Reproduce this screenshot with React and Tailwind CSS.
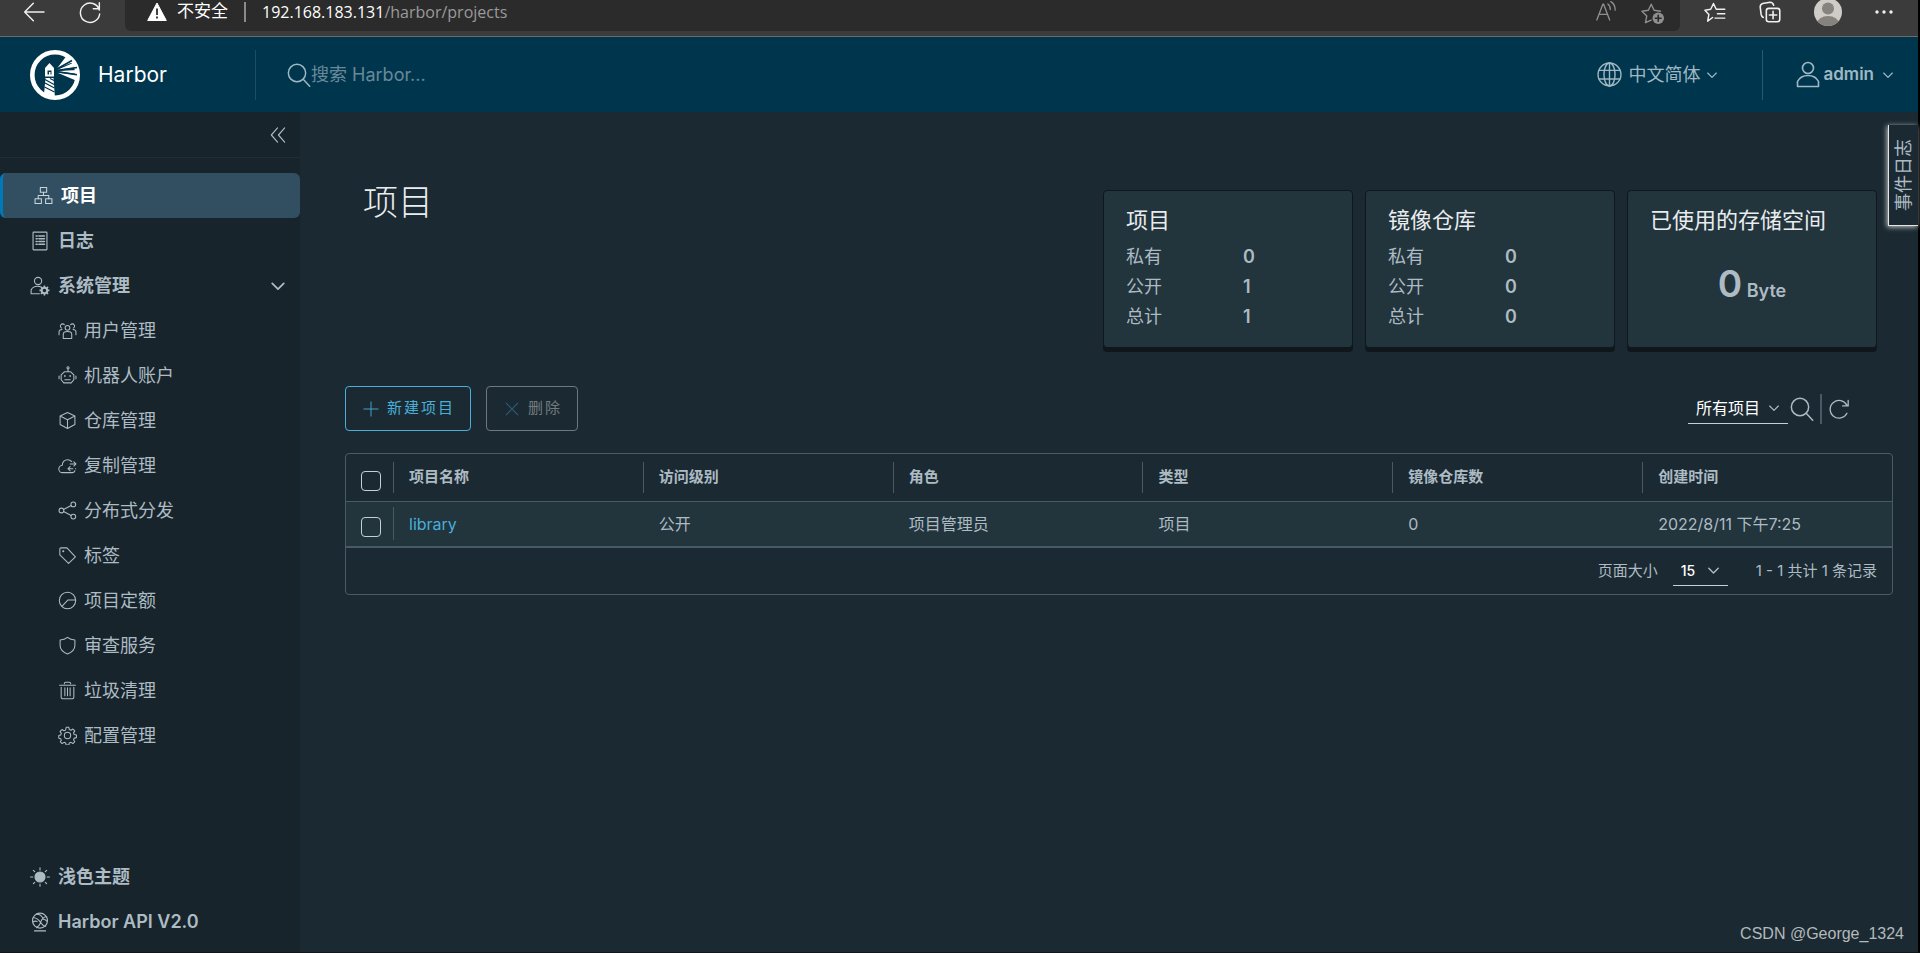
import React from "react";

function Icon({ className = "size-[22px]", sw = 2, children }) {
  return (
    <svg viewBox="0 0 36 36" className={"shrink-0 " + className} fill="none" stroke="currentColor" strokeWidth={sw} strokeLinejoin="round" strokeLinecap="round" aria-hidden="true">
      {children}
    </svg>
  );
}

function Chevron({ className = "size-[14px]", sw = 4 }) {
  return (
    <Icon className={className} sw={sw}>
      <path d="M5 12 L18 25 L31 12" />
    </Icon>
  );
}

const ICONS = {
  projects: (
    <>
      <rect x="12" y="3" width="12" height="9" />
      <rect x="2" y="24" width="12" height="9" />
      <rect x="22" y="24" width="12" height="9" />
      <path d="M18 12v6M8 24v-6h20v6" />
    </>
  ),
  logs: (
    <>
      <rect x="5.500" y="2" width="25" height="32" rx="1" />
      <path d="M11 9h2M16 9h10M11 14h2M16 14h10M11 19h2M16 19h10M11 24h2M16 24h10" strokeWidth="2.800" />
    </>
  ),
  admin: (
    <>
      <circle cx="14.500" cy="9" r="6.500" />
      <path d="M17 32H2v-7c2-4 7-6.500 12-6.500 1.500 0 3 .2 4.500.6" />
      <circle cx="26" cy="26" r="5" strokeWidth="3.600" />
      <path d="M26 17v3M26 32v3M17 26h3M32 26h3M19.600 19.600l2.200 2.200M30.200 30.200l2.200 2.200M19.600 32.400l2.200-2.200M30.200 21.800l2.200-2.200" strokeWidth="3" strokeLinecap="butt" />
    </>
  ),
  users: (
    <>
      <path d="M12 7a4.200 4.200 0 1 0-5 6.500M24 7a4.200 4.200 0 1 1 5 6.500" />
      <circle cx="18" cy="13" r="4.500" />
      <path d="M10 33v-8c0-3 4-5 8-5s8 2 8 5v8z" />
      <path d="M2 26v-6c0-2 2.500-3.500 5.500-4M34 26v-6c0-2-2.500-3.500-5.500-4" />
    </>
  ),
  robot: (
    <>
      <circle cx="19" cy="3.500" r="2" />
      <path d="M19 5.500V11M12 11h12l6 6v9l-5 6H11l-5-6v-9zM2 19v5M34 19v5M13 26h10" />
      <path d="M13 18.500v1M23 18.500v1" strokeWidth="3" />
    </>
  ),
  box: <path d="M18 3 32 9.500v16L18 33 4 25.500v-16zM4 9.500 18 16.500l14-7M18 16.500V33" />,
  cloud: (
    <>
      <path d="M32 28c-1 2.500-3 3.500-5 3.500H9a7 7 0 0 1-1-14C8 11 13 7 18 7c3 0 6 1.200 8 3.500" />
      <path d="M23 15h11M30 11l4 4-4 4M28 24H19M23 20l-4 4 4 4M33 24h.5" />
    </>
  ),
  share: (
    <>
      <circle cx="6.500" cy="18" r="4.500" />
      <circle cx="29" cy="6.500" r="4.500" />
      <circle cx="29" cy="29.500" r="4.500" />
      <path d="m10.500 16 14.500-7.500M10.500 20 25 27.500" />
    </>
  ),
  tag: (
    <>
      <path d="M3.500 5v12L20 33l13-12.500L17 3.500H5z" />
      <circle cx="10" cy="10" r="1" />
    </>
  ),
  quota: (
    <>
      <circle cx="18" cy="18" r="15.500" />
      <path d="M33.500 17H19L7.500 29" />
    </>
  ),
  shield: <path d="M18 2.500c4 3.200 9 4.700 14 5V18c0 8-6.500 13-14 16C10.500 31 4 26 4 18V7.500c5-.3 10-1.800 14-5z" />,
  trash: <path d="M3 8h30M6 12v19c0 1.500 1 2.500 2.500 2.500h19c1.500 0 2.500-1 2.500-2.500V12M13 13v15M18 13v15M23 13v15M12 5c0-1.500 1-2.500 2.500-2.500h7C23 2.500 24 3.500 24 5" />,
  gear: (
    <>
      <circle cx="18" cy="18" r="6" />
      <path d="M15.500 2.500h5l1 4.300 3 1.200 3.800-2.300 3.500 3.500-2.300 3.800 1.200 3 4.300 1v5l-4.300 1-1.200 3 2.300 3.800-3.500 3.500-3.800-2.300-3 1.200-1 3.800h-5l-1-3.800-3-1.200-3.800 2.300-3.500-3.500L6.300 27l-1.200-3-3.600-1v-5l3.600-1 1.200-3-2.300-3.800 3.500-3.500 3.800 2.300 3-1.200z" />
    </>
  ),
  sun: (
    <>
      <circle cx="18" cy="18" r="9" fill="currentColor" />
      <path d="M18 1.500v4M18 30.500v4M1 18h4M31 18h4M6 6l2.500 2.500M27.500 27.500 30 30M6 30l2.500-2.500M27.500 8.500 30 6" />
    </>
  ),
  api: (
    <>
      <circle cx="18" cy="15.500" r="13.500" />
      <path d="M8 34h20M6 10c6 1 10 4 13 9 3 4 5 6 9 7M30 8c-6 1-9 4-11 11-1 3-3 6-7 9M12 4c4 0 9 2 11 7M5 18c3-2 5-2 8-1M24 13c3 0 5 2 7 4" />
    </>
  ),
};

const SUB_ITEMS = [
  ["users", "用户管理"],
  ["robot", "机器人账户"],
  ["box", "仓库管理"],
  ["cloud", "复制管理"],
  ["share", "分布式分发"],
  ["tag", "标签"],
  ["quota", "项目定额"],
  ["shield", "审查服务"],
  ["trash", "垃圾清理"],
  ["gear", "配置管理"],
];

const COLUMNS = ["项目名称", "访问级别", "角色", "类型", "镜像仓库数", "创建时间"];

function BrowserBar() {
  return (
    <div className="flex h-[37px] border-b border-[#6a6a6a] bg-[#3b3b3b] text-[#f0f0f0]">
      <div className="flex h-6 w-[125px] items-center gap-8 pl-[22px]">
        <button type="button" aria-label="后退">
          <Icon className="size-[24px]" sw={2.2}>
            <path d="M33 18H4M17 5 4 18l13 13" />
          </Icon>
        </button>
        <button type="button" aria-label="刷新">
          <Icon className="size-[24px]" sw={2.2}>
            <path d="M32 15a14.500 14.500 0 1 0 .5 6M32 4v9h-9" />
          </Icon>
        </button>
      </div>
      <div className="flex h-[31px] flex-1 rounded-b-md bg-[#2b2b2b]">
        <div className="flex h-6 flex-1 items-center pl-[22px]">
          <svg viewBox="0 0 20 20" className="size-[20px]" aria-hidden="true">
            <path d="M10 1 19.300 18.500H.7z" fill="#fff" stroke="#fff" strokeLinejoin="round" />
            <path d="M10 6.500v6.500M10 14.500v2" stroke="#2b2b2b" strokeWidth="1.800" />
          </svg>
          <span className="ml-2.5 text-[17px] text-white">不安全</span>
          <span className="ml-4 h-5 w-[2px] bg-[#8a8a8a]" />
          <span className="ml-4 font-['Open_Sans','Noto_Sans_CJK_SC',sans-serif] text-[16px] text-[#9a9a9a]">
            <span className="text-white">192.168.183.131</span>/harbor/projects
          </span>
        </div>
        <div className="flex h-6 items-center gap-6 pr-4 text-[#8f8f8f]">
          <button type="button" aria-label="大声朗读">
            <Icon className="size-[22px]" sw={2.2}>
              <path d="M3 31 13 5h1l10 26M7 22h13M21 5c3 2 4 5 4 9M26 1c5 3 7 8 7 14" />
            </Icon>
          </button>
          <button type="button" aria-label="收藏">
            <Icon className="size-[23px]" sw={2.200}>
              <path d="M16 30l-9 4 2-10.500L1.500 16l10-1.500L16 5l4.500 9.500 10 1.500" />
              <circle cx="27" cy="27" r="9" fill="currentColor" stroke="none" />
              <path d="M27 22.500v9M22.500 27h9" stroke="#2b2b2b" strokeWidth="2.600" />
            </Icon>
          </button>
        </div>
      </div>
      <div className="flex h-6 items-center gap-[33px] pr-[25px] pl-[24px]">
        <button type="button" aria-label="收藏夹">
          <Icon className="size-[22px]" sw={2.400}>
            <path d="M14 27l-8 6 2-11L1.500 15l9.500-1.500L15.500 4l4.500 9.500H34M22 21h12M18 28h16" />
          </Icon>
        </button>
        <button type="button" aria-label="集锦">
          <Icon className="size-[22px]" sw={2.600}>
            <rect x="12" y="12" width="22" height="22" rx="4" />
            <path d="M23 17v12M17 23h12M7 27c-2-1-3-3-3.500-5L2 10c0-3 1-5 4-6l12-2c3 0 5 1 6 5" />
          </Icon>
        </button>
        <button type="button" aria-label="个人资料">
          <svg viewBox="0 0 28 28" className="size-[28px]" aria-hidden="true">
            <clipPath id="avatar"><circle cx="14" cy="14" r="14" /></clipPath>
            <g clipPath="url(#avatar)">
              <rect width="28" height="28" fill="#cfccc8" />
              <circle cx="14" cy="10.500" r="6" fill="#86827e" />
              <ellipse cx="14" cy="26" rx="11" ry="8" fill="#86827e" />
            </g>
          </svg>
        </button>
        <button type="button" aria-label="更多">
          <svg viewBox="0 0 18 4" className="h-1 w-[18px]" fill="currentColor" aria-hidden="true">
            <circle cx="2" cy="2" r="1.700" />
            <circle cx="9" cy="2" r="1.700" />
            <circle cx="16" cy="2" r="1.700" />
          </svg>
        </button>
      </div>
    </div>
  );
}

function Logo() {
  return (
    <svg viewBox="0 0 50 50" className="size-[50px]" aria-hidden="true">
      <circle cx="25" cy="25" r="22.700" fill="none" stroke="#fff" strokeWidth="4.600" />
      <path d="M27 18.500 36 6.500 42 12.500z M27 20 43 13 44 17.500z M27.500 21 48 20v4z M27 22.500 47 25v6z" fill="#fff" />
      <path d="M26 19.500 42 10.500M26.500 20.600 47 17.500M26.500 21.800 47 24.700" stroke="#00364d" strokeWidth="1.600" />
      <path d="M19.500 13 24 18v8.500h-9V18z" fill="#fff" />
      <path d="M17.500 20.500h4v4h-4z" fill="#00364d" />
      <path d="M19 22h1.500v3H19z" fill="#fff" />
      <path d="M15.500 28h8l1.500 20-11-4z" fill="#fff" />
      <path d="m15 29.500 9 5M15 33l9.500 5M14.500 37l10 5M20 28.500l4 2" stroke="#00364d" strokeWidth="1.200" />
    </svg>
  );
}

function Header() {
  return (
    <header className="flex h-[75px] items-center bg-[#00364d] text-[#9fb8c3]">
      <a href="#home" className="flex w-[255px] items-center gap-[18px] pl-[30px] text-[21px] text-white">
        <Logo />
        Harbor
      </a>
      <div className="h-[50px] w-px bg-[#1c4d62]" />
      <label className="flex flex-1 items-center pl-[31px]">
        <Icon className="size-[24px]" sw={2.200}>
          <circle cx="15" cy="15" r="13" />
          <path d="m25 25 9 10" />
        </Icon>
        <input type="text" aria-label="搜索" placeholder="搜索 Harbor..." className="w-[320px] bg-transparent text-[18px] text-white outline-none placeholder:text-[#69899a]" />
      </label>
      <button type="button" className="flex items-center text-[18px]">
        <Icon className="mr-1.5 size-[25px]" sw={2}>
          <circle cx="18" cy="18" r="16.500" />
          <ellipse cx="18" cy="18" rx="8" ry="16.500" />
          <path d="M18 1.500v33M3 12h30M3 24.500h30" />
        </Icon>
        中文简体
        <Chevron className="ml-1.5 size-[12px]" sw={3.500} />
      </button>
      <div className="mr-[33px] ml-[44px] h-[50px] w-px bg-[#2a5a70]" />
      <button type="button" className="flex items-center pr-[24px] text-[17px] font-semibold">
        <svg viewBox="0 0 24 27" className="mr-[3px] h-[27px] w-[24px]" fill="none" stroke="currentColor" strokeWidth="1.600" aria-hidden="true">
          <circle cx="12" cy="7" r="5.500" />
          <path d="M1.500 25.500v-5c2-4 6-6 10.500-6s8.500 2 10.500 6v5z" strokeLinejoin="round" />
        </svg>
        admin
        <Chevron className="ml-2 size-[12px]" sw={3.500} />
      </button>
    </header>
  );
}

function Sidebar() {
  return (
    <nav className="flex w-[300px] shrink-0 flex-col bg-[#17242b] text-[18px] text-[#adbbc4]">
      <div className="flex h-[46px] items-center justify-end border-b border-[#1f2f38] pr-[14px]">
        <button type="button" aria-label="收起">
          <Icon className="size-[16px]" sw={2.600}>
            <path d="M17 2 3 18l14 16M33 2 19 18l14 16" />
          </Icon>
        </button>
      </div>
      <ul className="mt-[15px] flex-1 font-bold">
        <li>
          <a href="#projects" className="flex h-[45px] items-center gap-2 rounded-md border-l-3 border-[#0079b8] bg-[#324f62] pl-[31px] text-white">
            <Icon className="size-[19px] text-[#c9d5dc]">{ICONS.projects}</Icon>
            项目
          </a>
        </li>
        <li>
          <a href="#logs" className="flex h-[45px] items-center gap-2 pl-[30px]">
            <Icon className="size-[20px]">{ICONS.logs}</Icon>
            日志
          </a>
        </li>
        <li>
          <button type="button" aria-expanded="true" className="flex h-[45px] w-full items-center gap-2 pr-[14px] pl-[30px] font-bold">
            <Icon className="size-[20px]">{ICONS.admin}</Icon>
            系统管理
            <Chevron className="ml-auto size-[16px]" sw={4} />
          </button>
          <ul className="font-normal">
            {SUB_ITEMS.map(([icon, label]) => (
              <li key={icon}>
                <a href={"#" + icon} className="flex h-[45px] items-center gap-[7px] pl-[58px]">
                  <Icon className="size-[19px]">{ICONS[icon]}</Icon>
                  {label}
                </a>
              </li>
            ))}
          </ul>
        </li>
      </ul>
      <ul className="pb-2 font-semibold">
        <li>
          <button type="button" className="flex h-[45px] items-center gap-2 pl-[30px] font-bold">
            <Icon className="size-[20px]">{ICONS.sun}</Icon>
            浅色主题
          </button>
        </li>
        <li>
          <a href="#api" className="flex h-[45px] items-center gap-2 pl-[30px]">
            <Icon className="size-[20px]">{ICONS.api}</Icon>
            Harbor API V2.0
          </a>
        </li>
      </ul>
    </nav>
  );
}

function Card({ title, children }) {
  return (
    <section className="h-[158px] w-[250px] rounded border border-[#0f171c] bg-[#22343c] px-[22px] pt-[14px] shadow-[0_4px_0_0_#0f171c]">
      <h2 className="text-[22px] leading-[30px] text-[#e9ecef]">{title}</h2>
      {children}
    </section>
  );
}

function Counts({ values }) {
  return (
    <dl className="mt-[7px] grid grid-cols-[117px_1fr] text-[18px] leading-[30px]">
      {["私有", "公开", "总计"].map((label, i) => (
        <React.Fragment key={label}>
          <dt>{label}</dt>
          <dd className="font-semibold">{values[i]}</dd>
        </React.Fragment>
      ))}
    </dl>
  );
}

function Check({ label }) {
  return <input type="checkbox" aria-label={label} className="mt-[7px] block size-[20px] appearance-none rounded-[4px] border border-[#c5d0d6]" />;
}

function ProjectTable() {
  return (
    <div className="mt-[22px] rounded border border-[#495a67]">
      <table className="w-full table-fixed border-collapse text-left">
        <thead>
          <tr className="h-[47px] border-b border-[#495a67] text-[15px]">
            <th className="w-[47px] pl-[15px]"><Check label="全选" /></th>
            {COLUMNS.map((c) => (
              <th key={c} className="p-0">
                <div className="flex h-[31px] items-center border-l border-[#495a67] pl-[15px]">
                  {c}
                </div>
              </th>
            ))}
          </tr>
        </thead>
        <tbody>
          <tr className="h-[46px] border-b-2 border-[#495a67] bg-[#22343c] text-[16px]">
            <td className="pl-[15px]"><Check label="选择 library" /></td>
            <td>
              <div className="flex h-[33px] items-center border-l border-[#495a67] pl-[15px]">
                <a href="#library" className="text-[#49afd9]">library</a>
              </div>
            </td>
            <td className="pl-4">公开</td>
            <td className="pl-4">项目管理员</td>
            <td className="pl-4">项目</td>
            <td className="pl-4">0</td>
            <td className="pl-4">2022/8/11 下午7:25</td>
          </tr>
        </tbody>
      </table>
      <div className="flex h-[46px] items-center justify-end pr-[15px] text-[15px]">
        <label htmlFor="page-size">页面大小</label>
        <div className="relative ml-[15px] self-end pb-2">
          <select id="page-size" defaultValue="15" className="block h-[30px] w-[55px] appearance-none border-b border-[#c5d0d6] bg-transparent pl-2 text-[14px] font-medium text-white">
            <option>15</option>
            <option>25</option>
            <option>50</option>
          </select>
          <Chevron className="pointer-events-none absolute top-2 right-2 size-[13px]" />
        </div>
        <span className="ml-7">1 - 1 共计 1 条记录</span>
      </div>
    </div>
  );
}

export default function App() {
  return (
    <div className="relative flex min-h-screen flex-col border-r-2 border-b border-r-black border-b-[#10161a] bg-[#1b2a32] font-['Inter','Noto_Sans_CJK_SC',sans-serif] text-[#adbbc4]">
      <BrowserBar />
      <Header />
      <div className="flex flex-1">
        <Sidebar />
        <main className="min-w-0 flex-1 pr-[25px] pl-[45px]">
          <div className="flex justify-between pt-[66px] pr-4 pl-[18px]">
            <h1 className="text-[35px] leading-[48px] font-light text-[#e9ecef]">项目</h1>
            <div className="mt-3 flex gap-3">
              <Card title="项目"><Counts values={[0, 1, 1]} /></Card>
              <Card title="镜像仓库"><Counts values={[0, 0, 0]} /></Card>
              <Card title="已使用的存储空间">
                <p className="mt-[25px] text-center text-[18px] leading-[48px] font-semibold">
                  <span className="text-[37px]">0</span> Byte
                </p>
              </Card>
            </div>
          </div>
          <div className="mt-[38px] flex items-center">
            <button type="button" className="flex h-[45px] items-center gap-2 rounded border border-[#49afd9] pr-[15px] pl-[17px] text-[15px] tracking-[2px] text-[#49afd9]">
              <Icon className="size-[16px]" sw={2}><path d="M18 2v32M2 18h32" /></Icon>
              新建项目
            </button>
            <button type="button" disabled className="ml-[15px] flex h-[45px] items-center gap-2 rounded border border-[#6f787f] pr-[15px] pl-[17px] text-[15px] tracking-[2px] text-[#737b80]">
              <Icon className="size-[16px] text-[#2c5f78]" sw={2.400}><path d="M5 5l26 26M31 5 5 31" /></Icon>
              删除
            </button>
            <div className="ml-auto flex items-center pr-[43px]">
              <div className="relative">
                <select aria-label="项目筛选" defaultValue="所有项目" className="block h-[30px] w-[100px] appearance-none border-b border-[#c5d0d6] bg-transparent pl-2 text-[16px] text-white">
                  <option>所有项目</option>
                  <option>私有项目</option>
                  <option>公开项目</option>
                </select>
                <Chevron className="pointer-events-none absolute top-[8px] right-2 size-[12px]" sw={3.500} />
              </div>
              <button type="button" aria-label="搜索项目" className="ml-[2px]">
                <Icon className="size-[24px]" sw={2.200}>
                  <circle cx="15" cy="15" r="13" />
                  <path d="m25 25 9 10" />
                </Icon>
              </button>
              <span className="mx-[6px] h-[30px] w-[2px] bg-[#495a67]" />
              <button type="button" aria-label="刷新列表">
                <Icon className="size-[22px]" sw={2.200}>
                  <path d="M31 12A14.500 14.500 0 1 0 31 25M33 4v9h-9" />
                </Icon>
              </button>
            </div>
          </div>
          <ProjectTable />
        </main>
      </div>
      <button type="button" className="absolute top-[125px] right-0 flex h-[101px] w-[30px] items-center justify-center border-b border-l border-[#e4e4e4] bg-[#1b2a32] text-[18px] shadow-[-1px_1px_5px_0_#c8c8c8]">
        <span className="rotate-180 [text-orientation:sideways] [writing-mode:vertical-rl]">事件日志</span>
      </button>
      <p className="absolute right-[14px] bottom-[6px] font-['Liberation_Sans',sans-serif] text-[16px] text-[#b4b9bc]">CSDN @George_1324</p>
    </div>
  );
}
